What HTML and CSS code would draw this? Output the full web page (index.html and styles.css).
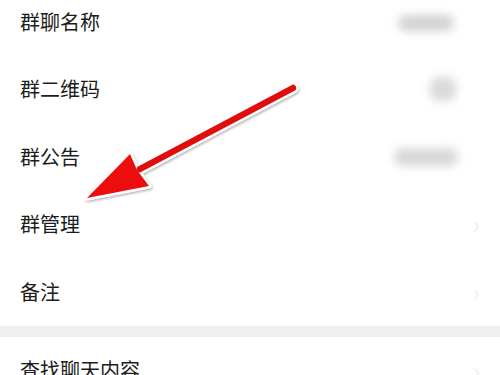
FILE: index.html
```html
<!DOCTYPE html>
<html>
<head>
	<title>聊天信息</title>
	<link rel="stylesheet" href="styles.css">
</head>
<body>
	<div class="page">
		<div class="group first">
			<div class="row"><span class="label">群聊名称</span><span class="value blob-wide"></span></div>
			<div class="row"><span class="label">群二维码</span><span class="value blob-small"></span></div>
			<div class="row"><span class="label">群公告</span><span class="value blob-note"></span></div>
			<div class="row"><span class="label">群管理</span><span class="chev">&rsaquo;</span></div>
			<div class="row"><span class="label">备注</span><span class="chev">&rsaquo;</span></div>
		</div>
		<div class="gap"></div>
		<div class="group">
			<div class="row"><span class="label">查找聊天内容</span><span class="chev">&rsaquo;</span></div>
		</div>

		<svg class="arrow" width="500" height="375" viewBox="0 0 500 375">
			<defs>
				<filter id="sh" x="-10%" y="-10%" width="120%" height="120%">
					<feDropShadow dx="1" dy="1.5" stdDeviation="0.8" flood-color="#000" flood-opacity="0.3"/>
				</filter>
			</defs>
			<g filter="url(#sh)">
				<line x1="293" y1="88" x2="140" y2="169" stroke="#fff" stroke-width="11" stroke-linecap="round"/>
				<polygon points="87,198 130,154 137,170 149,186" fill="#fff" stroke="#fff" stroke-width="5" stroke-linejoin="round"/>
				<line x1="293" y1="88" x2="140" y2="169" stroke="#e01010" stroke-width="6.5" stroke-linecap="round"/>
				<polygon points="87,198 130,154 137,170 149,186" fill="#ee1111"/>
			</g>
		</svg>
	</div>
</body>
</html>
```

FILE: styles.css
```css
body {
	margin: 0;
	background-color: #fff;
	font-family: "Noto Sans CJK SC", "Noto Sans", sans-serif;
	overflow: hidden;
}
.page {
	position: relative;
	width: 500px;
	height: 375px;
	overflow: hidden;
}
.group {
	background-color: #fff;
}
.group.first {
	margin-top: -12px;
}
.row {
	display: flex;
	align-items: center;
	justify-content: space-between;
	height: 67.5px;
	padding: 0 22px 0 20px;
}
.label {
	color: #1c1c1c;
	font-size: 20px;
	line-height: 1;
}
.value {
	display: block;
	background-color: #d2d2d2;
	filter: blur(5px);
	border-radius: 8px;
}
.blob-wide {
	width: 56px;
	height: 16px;
	margin-right: 24px;
	margin-top: 2px;
}
.blob-small {
	width: 26px;
	height: 24px;
	margin-right: 22px;
	background-color: #dadada;
}
.blob-note {
	width: 64px;
	height: 18px;
	margin-right: 20px;
	background-color: #d8d8d8;
}
.chev {
	color: #efefef;
	font-size: 24px;
	line-height: 1;
	margin-right: -2px;
}
.gap {
	height: 11px;
	background-color: #efefef;
}
.arrow {
	position: absolute;
	left: 0;
	top: 0;
}
```
